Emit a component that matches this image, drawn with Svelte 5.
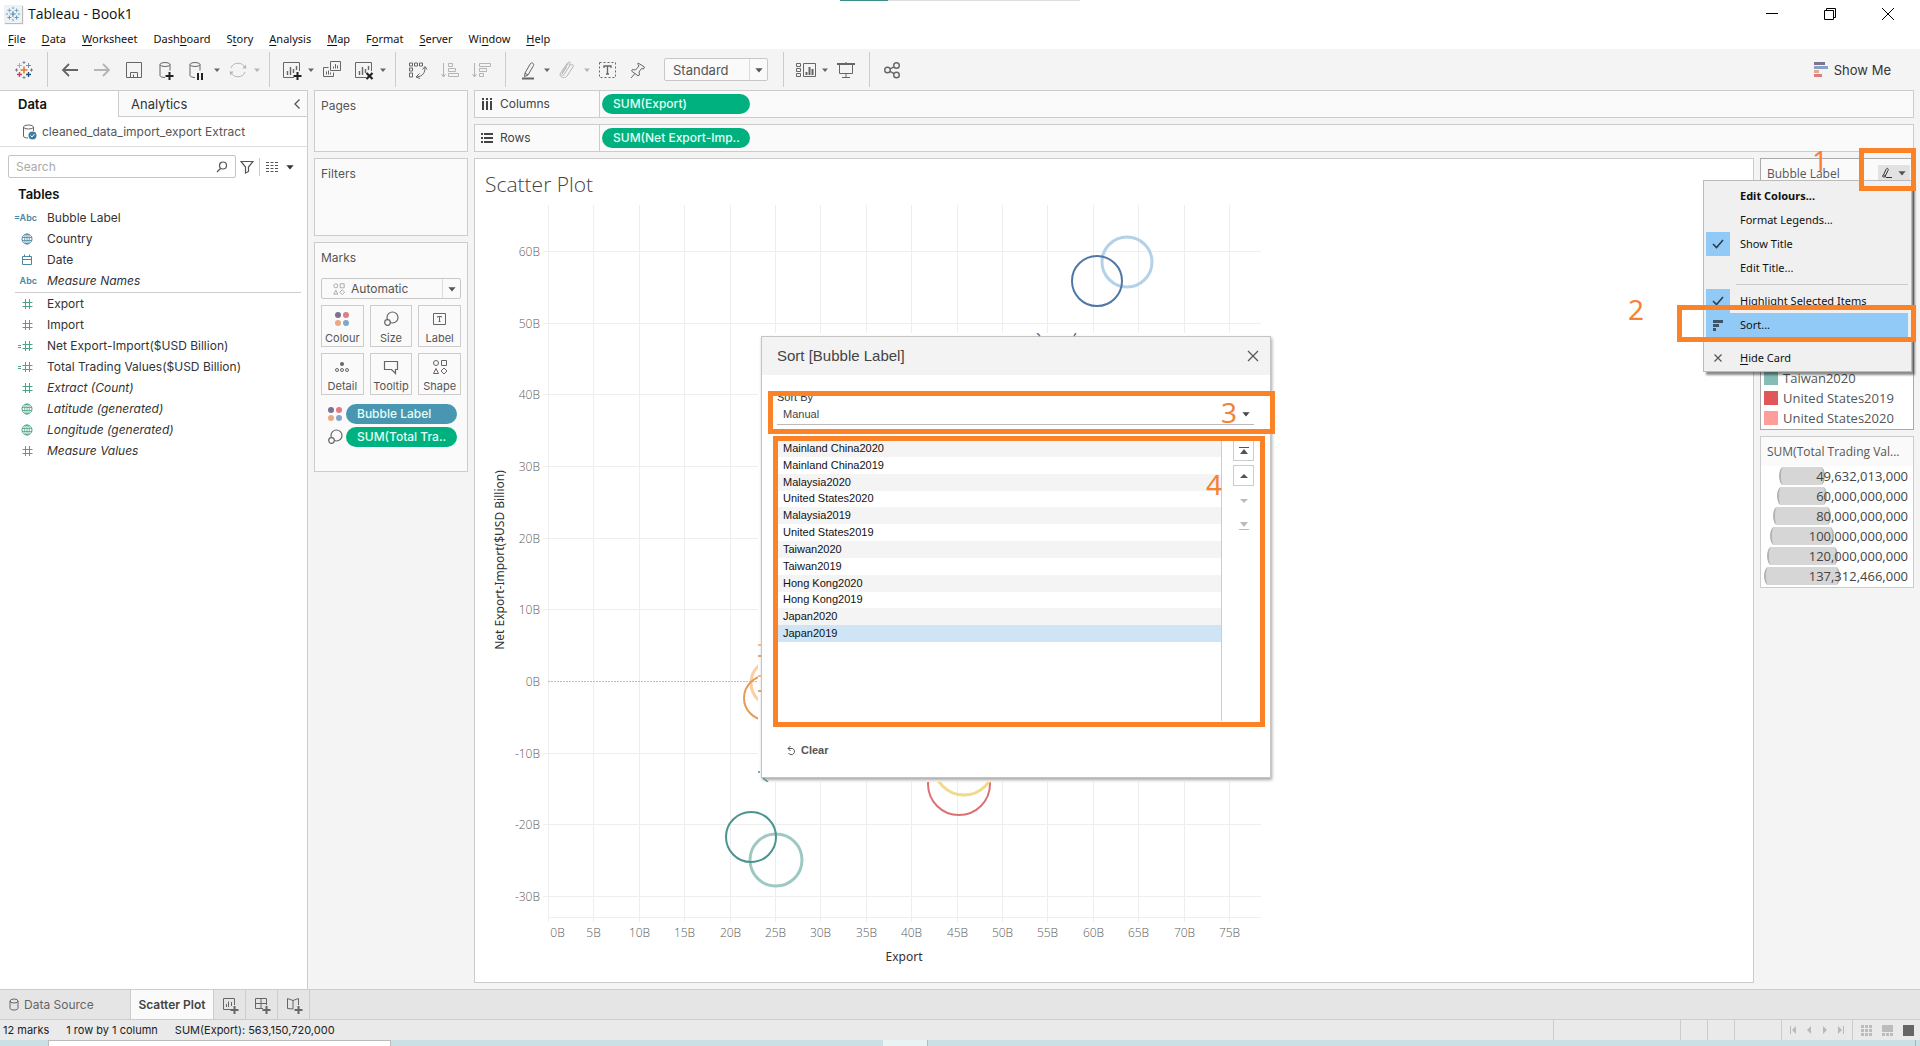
<script lang="ts">
	type Field = { icon: string; label: string; generated?: boolean };
	type Mark = { x: number; y: number; r: number; color: string; width?: number };

	const menus = [
		["", "F", "ile"],
		["", "D", "ata"],
		["", "W", "orksheet"],
		["Dash", "b", "oard"],
		["S", "t", "ory"],
		["", "A", "nalysis"],
		["", "M", "ap"],
		["F", "o", "rmat"],
		["", "S", "erver"],
		["Wi", "n", "dow"],
		["", "H", "elp"],
	];

	const dimensions: Field[] = [
		{ icon: "calc-abc", label: "Bubble Label" },
		{ icon: "globe", label: "Country" },
		{ icon: "calendar", label: "Date" },
		{ icon: "abc", label: "Measure Names", generated: true },
	];

	const measures: Field[] = [
		{ icon: "hash", label: "Export" },
		{ icon: "hash", label: "Import" },
		{ icon: "calc-hash", label: "Net Export-Import($USD Billion)" },
		{ icon: "calc-hash", label: "Total Trading Values($USD Billion)" },
		{ icon: "hash", label: "Extract (Count)", generated: true },
		{ icon: "globe", label: "Latitude (generated)", generated: true },
		{ icon: "globe", label: "Longitude (generated)", generated: true },
		{ icon: "hash", label: "Measure Values", generated: true },
	];

	const markCards = [
		{ icon: "dots", label: "Colour" },
		{ icon: "size", label: "Size" },
		{ icon: "label", label: "Label" },
		{ icon: "detail", label: "Detail" },
		{ icon: "tooltip", label: "Tooltip" },
		{ icon: "shapes", label: "Shape" },
	];

	const sortOrder = [
		"Mainland China2020",
		"Mainland China2019",
		"Malaysia2020",
		"United States2020",
		"Malaysia2019",
		"United States2019",
		"Taiwan2020",
		"Taiwan2019",
		"Hong Kong2020",
		"Hong Kong2019",
		"Japan2020",
		"Japan2019",
	];
	let selected = $state("Japan2019");

	const colorLegend = [
		{ label: "Taiwan2020", color: "#86bcb6" },
		{ label: "United States2019", color: "#e15759" },
		{ label: "United States2020", color: "#ff9d9a" },
	];

	const sizeLegend = [
		{ label: "49,632,013,000", size: 46 },
		{ label: "60,000,000,000", size: 50 },
		{ label: "80,000,000,000", size: 58 },
		{ label: "100,000,000,000", size: 64 },
		{ label: "120,000,000,000", size: 71 },
		{ label: "137,312,466,000", size: 76 },
	];

	// chart geometry, in px of the chart's own viewBox
	const chartW = 800;
	const chartH = 770;
	const left = 73;
	const right = 786;
	const top = 6;
	const bottom = 718;
	const zeroY = 482;

	const xAt = (v: number) => Math.round(left + v * 9.08) + 0.5;
	const yAt = (v: number) => Math.round(zeroY - v * 7.17) + 0.5;

	const xTicks = Array.from({ length: 16 }, (_, i) => i * 5);
	const yTicks = Array.from({ length: 10 }, (_, i) => 60 - i * 10);

	const marks: Mark[] = [
		{ x: 652, y: 63, r: 25, color: "#b3d2e8", width: 3 },
		{ x: 622, y: 82, r: 25, color: "#4f77a5" },
		{ x: 299, y: 484, r: 23, color: "#fbcfa2", width: 3 },
		{ x: 291, y: 499, r: 22, color: "#e59b55" },
		{ x: 301, y: 661, r: 26, color: "#9fc8c2", width: 3 },
		{ x: 276, y: 638, r: 25, color: "#4a9490" },
		{ x: 484, y: 585, r: 31, color: "#dd7073" },
		{ x: 489, y: 566, r: 30, color: "#f1d987", width: 3 },
	];
</script>

{#snippet caret()}
	<svg class="caret" width="10" height="10" viewBox="0 0 10 10" aria-hidden="true">
		<path d="M2 3.500h6L5 7z" fill="currentColor" />
	</svg>
{/snippet}

{#snippet check()}
	<svg width="12" height="10" viewBox="0 0 12 10" fill="none" aria-hidden="true">
		<path d="M1 5l3.500 3.500L11 1" stroke="#2a3f50" stroke-width="1.600" />
	</svg>
{/snippet}

{#snippet sparkle(size: number, mono: boolean)}
	<svg width={size} height={size} viewBox="0 0 20 20" fill="none" aria-hidden="true">
		<path d="M10 6.500v7M6.500 10h7" stroke={mono ? "#4a87b0" : "#e8762c"} stroke-width="1.500" />
		<path d="M5.500 3v5M3 5.500h5" stroke={mono ? "#5b9bc0" : "#e8a15c"} />
		<path d="M14.500 3v5M12 5.500h5" stroke={mono ? "#5b9bc0" : "#6f8fa8"} />
		<path d="M5.500 12v5M3 14.500h5" stroke={mono ? "#5b9bc0" : "#c0405a"} stroke-width="1.300" />
		<path d="M14.500 12v5M12 14.500h5" stroke={mono ? "#5b9bc0" : "#1f4f7a"} stroke-width="1.300" />
		<path d="M10 1v3M8.500 2.500h3M10 16v3M8.500 17.500h3" stroke={mono ? "#7bb0cc" : "#7f86a8"} />
		<path d="M2.500 8.500v3M1 10h3M17.500 8.500v3M16 10h3" stroke={mono ? "#7bb0cc" : "#7a6b8f"} />
	</svg>
{/snippet}

{#snippet icon(name: string)}
	{#if name === "dots"}
		<svg width="16" height="16" viewBox="0 0 16 16" aria-hidden="true">
			<circle cx="4" cy="4" r="3" fill="#7f6f92" />
			<circle cx="12" cy="4" r="3" fill="#e37a86" />
			<circle cx="4" cy="12" r="3" fill="#eba982" />
			<circle cx="12" cy="12" r="3" fill="#83a5cc" />
		</svg>
	{:else}
		<svg width="20" height="20" viewBox="0 0 20 20" fill="none" stroke="currentColor" aria-hidden="true">
			{#if name === "back"}
				<path d="M18 10H3M9 4l-6 6 6 6" stroke-width="1.800" />
			{:else if name === "forward"}
				<path d="M2 10h15M11 4l6 6-6 6" stroke-width="1.800" />
			{:else if name === "save"}
				<path d="M2.500 2.500h15v15h-15zM6.500 17v-4.500h7V17M9.500 17v-2.500" />
			{:else if name === "db-add"}
				<ellipse cx="9" cy="4.500" rx="5" ry="2" />
				<path d="M4 4.500v11c0 1 2 2 5 2M14 4.500v6" />
				<path d="M13.500 12v8M9.500 16h8" stroke="#222" stroke-width="2" />
			{:else if name === "db-pause"}
				<ellipse cx="7" cy="4.500" rx="5" ry="2" />
				<path d="M2 4.500v11c0 1 2 2 5 2M12 4.500v6" />
				<path d="M10 13v7M14 13v7" stroke="#222" stroke-width="2" />
			{:else if name === "refresh"}
				<path d="M3 8a7.500 7.500 0 0 1 14 0M17 12a7.500 7.500 0 0 1-14 0" />
				<path d="M14.500 8.500h4l-1-4zM5.500 11.500h-4l1 4z" fill="currentColor" stroke="none" />
			{:else if name === "sheet-add" || name === "sheet-clear"}
				<path d="M12 17.500H1.500v-15h16V11" />
				<path d="M5.500 15v-4M8.500 15V7M11.500 13V9M14.500 10V6" stroke-width="1.400" />
				{#if name === "sheet-add"}
					<path d="M15.500 12v8M11.500 16h8" stroke="#222" stroke-width="2" />
				{:else}
					<path d="M12.500 13l6 6M18.500 13l-6 6" stroke="#222" stroke-width="2.200" />
				{/if}
			{:else if name === "duplicate"}
				<path d="M8.500 1.500h10v9h-10zM6.500 7.500h-5v9h10v-4" />
				<path d="M11.500 8.500v-2M13.500 8.500V4M15.500 8.500v-3M4.500 14.500v-3M6.500 14.500v-4M8.500 14.500v-2" />
			{:else if name === "swap"}
				<path d="M1.500 3h3v3h-3zM6.500 3h3v3h-3zM11.500 3h3v3h-3zM1.500 8h3v3h-3zM1.500 13h3v4h-3z" />
				<path d="M17 7c0 6-2 9-8 10M14.500 9.500L17 6.500l2 3M11.500 13.500L8 17l4 1.500" />
			{:else if name === "sort-asc"}
				<path d="M3.500 3v14M1.500 14l2 3 2-3M8.500 3.500h4v3h-4zM8.500 8.500h7v3h-7zM8.500 13.500h10v3h-10z" />
			{:else if name === "sort-desc"}
				<path d="M2.500 3v14M.5 14l2 3 2-3M7.500 3.500h11v3h-11zM7.500 8.500h7v3h-7zM7.500 13.500h4v3h-4z" />
			{:else if name === "highlight"}
				<path d="M7 13l5.500-9.500c1-1.500 4 0 3 2L10 15l-3.500 1.500zM7 13l3 2" />
				<path d="M4 18.500h12" stroke-width="2" />
			{:else if name === "clip"}
				<path d="M4 13l5.500-8.500c1-1.500 3-.5 2 1.500L6 14.500c-1 1.500-2.500.5-2-.5l4.500-7M11.500 5.500c3-2 4.500-.5 3.500 1.500l-6 9c-1.500 2-5.500 2-6.500 0-1-1.500 0-3 1-4.500l6-8.500c1.500-1.500 3-1 3 .5" />
			{:else if name === "text"}
				<path d="M1.500 2.500h16v15h-16z" stroke-dasharray="2 2" />
				<path d="M6 8V6h7v2M9.500 6v8M8 14h3" stroke-width="1.300" />
			{:else if name === "pin"}
				<path d="M8 3l6.500 4-1 2-2-.5L9 12l.5 3-1.500.8L1.500 11l1-1.500 3 .5L9 6 8 4.500zM5 13.500L1 18" />
			{:else if name === "cards"}
				<path d="M.5 3.500h4v3h-4zM.5 8.500h4v3h-4zM.5 13.500h4v3h-4zM7.500 3.500h12v13h-12z" />
				<path d="M10.500 15v-3M13.500 15V7M16.500 15V9" stroke-width="2" />
			{:else if name === "present"}
				<path d="M1 4h18" stroke-width="2" />
				<path d="M3.500 5v8.500h13V5M10 2v2M10 13.500v4M6 17.500h8" />
			{:else if name === "share"}
				<circle cx="5.500" cy="10" r="2.800" stroke-width="1.400" />
				<circle cx="14.500" cy="5.500" r="2.800" stroke-width="1.400" />
				<circle cx="14.500" cy="15" r="2.800" stroke-width="1.400" />
				<path d="M8 8.800l4-2M8 11.400l4 2.200" stroke-width="1.400" />
			{:else if name === "globe"}
				<circle cx="10" cy="10" r="5" />
				<ellipse cx="10" cy="10" rx="2.300" ry="5" stroke-width=".8" />
				<path d="M5 8.500h10M5 11.500h10M10 5v10" stroke-width=".8" />
			{:else if name === "calendar"}
				<path d="M5.500 6.500h9v8h-9zM5.500 9.500h9M7.500 4.500v2M12.500 4.500v2" />
			{:else if name === "hash" || name === "calc-hash"}
				<path d="M8.500 5v10M12.500 5v10M5.500 8.500h10M5.500 12.500h10" />
				{#if name === "calc-hash"}
					<path d="M1 9.500h3M1 11.500h3" />
				{/if}
			{:else if name === "size"}
				<circle cx="11.500" cy="8.500" r="5.500" stroke-width="1.200" />
				<circle cx="6.500" cy="13.500" r="2.800" fill="#fafafa" stroke-width="1.200" />
			{:else if name === "label"}
				<path d="M3.500 4.500h12v11h-12z" />
				<path d="M7.500 8.500v-1h4v1M9.500 7.500v5M8.500 12.500h2" />
			{:else if name === "detail"}
				<circle cx="10" cy="7" r="2" fill="currentColor" stroke="none" />
				<circle cx="5" cy="13" r="1.500" />
				<circle cx="10" cy="13" r="1.500" />
				<circle cx="15" cy="13" r="1.500" />
			{:else if name === "tooltip"}
				<path d="M3.500 4.500h13v8h-2v4l-4-4h-7z" stroke-width="1.200" />
			{:else if name === "shapes"}
				<circle cx="6" cy="6" r="2.500" />
				<path d="M11.500 3.500h5v5h-5zM6 11.500l2.500 5h-5z" />
				<path d="M14 11l3 3-3 3-3-3z" />
			{:else if name === "new-sheet"}
				<path d="M11 14.500H3.500v-11h11V10M6.500 12V9M8.500 12V6.500M11.500 11V7" />
				<path d="M14.500 11v8M10.500 15h8" stroke-width="2" />
			{:else if name === "new-dash"}
				<path d="M11 13.500H3.500v-10h11V10M9 3.500v10M3.500 8.500h11" />
				<path d="M14.500 11v8M10.500 15h8" stroke-width="2" />
			{:else if name === "new-story"}
				<path d="M9 5.500v8.500l-5.500-.5v-10L9 5.500l5.500-2V10" />
				<path d="M14.500 11v8M10.500 15h8" stroke-width="2" />
			{/if}
		</svg>
	{/if}
{/snippet}

{#snippet tool(name: string, label: string, off = false)}
	<button class="tool" class:off aria-label={label}>{@render icon(name)}</button>
{/snippet}

{#snippet menuTool(name: string, label: string, off = false)}
	<button class="tool pair" class:off aria-label={label}>{@render icon(name)}{@render caret()}</button>
{/snippet}

{#snippet field(f: Field, measure: boolean)}
	<li class="field" class:measure class:generated={f.generated}>
		<span class="field-icon">
			{#if f.icon === "abc"}<b>Abc</b>{:else if f.icon === "calc-abc"}<b>=Abc</b>{:else}{@render icon(f.icon)}{/if}
		</span>
		<span>{f.label}</span>
	</li>
{/snippet}

<div class="app">
	<header class="titlebar">
		<span class="app-icon">{@render sparkle(16, true)}</span>
		<span class="app-title">Tableau - Book1</span>
		<span class="edge-mark"></span>
		<div class="win-buttons">
			<button aria-label="Minimise"><svg width="14" height="14" viewBox="0 0 14 14"><path d="M1 6.500h12" stroke="#000" /></svg></button>
			<button aria-label="Restore"><svg width="14" height="14" viewBox="0 0 14 14" fill="none" stroke="#000"><path d="M1.500 3.500h9v9h-9zM3.500 3V1.500h9v9H11" /></svg></button>
			<button aria-label="Close window"><svg width="14" height="14" viewBox="0 0 14 14"><path d="M1 1l12 12M13 1L1 13" stroke="#000" /></svg></button>
		</div>
	</header>

	<nav class="menubar">
		{#each menus as [before, key, after]}
			<button>{before}<u>{key}</u>{after}</button>
		{/each}
	</nav>

	<div class="toolbar">
		<div class="group first"><button class="tool" aria-label="Start page">{@render sparkle(20, false)}</button></div>
		<div class="group">
			{@render tool("back", "Undo")}
			{@render tool("forward", "Redo", true)}
			{@render tool("save", "Save")}
			{@render tool("db-add", "New data source")}
			{@render menuTool("db-pause", "Pause auto updates")}
			{@render menuTool("refresh", "Run update", true)}
		</div>
		<div class="group">
			{@render menuTool("sheet-add", "New worksheet")}
			{@render tool("duplicate", "Duplicate")}
			{@render menuTool("sheet-clear", "Clear sheet")}
		</div>
		<div class="group">
			{@render tool("swap", "Swap rows and columns")}
			{@render tool("sort-asc", "Sort ascending", true)}
			{@render tool("sort-desc", "Sort descending", true)}
		</div>
		<div class="group">
			{@render menuTool("highlight", "Highlight")}
			{@render menuTool("clip", "Group members", true)}
			{@render tool("text", "Show mark labels")}
			{@render tool("pin", "Fix axes")}
			<div class="combo fit">
				<select aria-label="Fit"><option>Standard</option></select>
				<span class="combo-arrow">{@render caret()}</span>
			</div>
		</div>
		<div class="group">
			{@render menuTool("cards", "Show or hide cards")}
			{@render tool("present", "Presentation mode")}
		</div>
		<div class="group last">{@render tool("share", "Share workbook")}</div>
		<button class="show-me">
			<svg width="14" height="16" viewBox="0 0 14 16" aria-hidden="true">
				<path d="M0 0h11v3H0z" fill="#7f7391" />
				<path d="M0 4h14v3H0z" fill="#86a2c6" />
				<path d="M0 8h5v3H0z" fill="#e3ac88" />
				<path d="M0 12h8v3H0z" fill="#e07b84" />
			</svg>
			Show Me
		</button>
	</div>

	<div class="workspace">
		<aside class="data-pane">
			<div class="pane-tabs">
				<button class="pane-tab active">Data</button>
				<button class="pane-tab">Analytics</button>
				<button class="collapse" aria-label="Collapse pane"><svg width="8" height="12" viewBox="0 0 8 12" fill="none"><path d="M6.500 1.500L2 6l4.500 4.500" stroke="#555" stroke-width="1.300" /></svg></button>
			</div>
			<div class="source">
				<svg width="16" height="16" viewBox="0 0 16 16" fill="none" aria-hidden="true">
					<ellipse cx="6.500" cy="3" rx="5" ry="2" stroke="#666" />
					<path d="M1.500 3v9c0 1.500 2 2 4.500 2M11.500 3v4" stroke="#666" />
					<circle cx="10.500" cy="11.500" r="4" fill="#3a7f9c" />
					<path d="M8.500 11.500l1.500 1.500 2.500-3" stroke="#fff" />
				</svg>
				<span>cleaned_data_import_export Extract</span>
			</div>
			<div class="search-row">
				<label class="search">
					<input type="text" placeholder="Search" aria-label="Search fields" />
					<svg width="12" height="12" viewBox="0 0 12 12" fill="none" stroke="#555" stroke-width="1.200"><circle cx="7" cy="4.500" r="3.500" /><path d="M4.500 7.500L1 11" /></svg>
				</label>
				<button aria-label="Filter fields"><svg width="14" height="14" viewBox="0 0 14 14" fill="none" stroke="#555" stroke-width="1.200"><path d="M1 1.500h12L8.500 7v4.500L5.500 13V7z" /></svg></button>
				<button class="view-as" aria-label="View fields">
					<svg width="12" height="10" viewBox="0 0 12 10" stroke="#555"><path d="M0 .5h3M4.500.5h3M9 .5h3M0 3.500h3M4.500 3.500h3M9 3.500h3M0 6.500h3M4.500 6.500h3M9 6.500h3M0 9.500h3M4.500 9.500h3M9 9.500h3" /></svg>
					{@render caret()}
				</button>
			</div>
			<h2>Tables</h2>
			<ul>
				{#each dimensions as f (f.label)}{@render field(f, false)}{/each}
			</ul>
			<ul class="measures">
				{#each measures as f (f.label)}{@render field(f, true)}{/each}
			</ul>
		</aside>

		<div class="cards">
			<section class="card pages"><h3>Pages</h3></section>
			<section class="card filters"><h3>Filters</h3></section>
			<section class="card marks-card">
				<h3>Marks</h3>
				<div class="combo mark-type">
					<span class="combo-icon">{@render icon("shapes")}</span>
					<select aria-label="Mark type"><option>Automatic</option></select>
					<span class="combo-arrow">{@render caret()}</span>
				</div>
				<div class="mark-grid">
					{#each markCards as m (m.label)}
						<button class="mark-button"><span class="mark-icon">{@render icon(m.icon)}</span>{m.label}</button>
					{/each}
				</div>
				<div class="encoding"><span class="enc-icon">{@render icon("dots")}</span><span class="pill blue">Bubble Label</span></div>
				<div class="encoding"><span class="enc-icon">{@render icon("size")}</span><span class="pill">SUM(Total Tra..</span></div>
			</section>
		</div>

		<main class="canvas">
			<div class="shelf">
				<span class="shelf-name">
					<svg width="12" height="12" viewBox="0 0 12 12" stroke="#444" stroke-width="2"><path d="M2 0v2M6 0v2M10 0v2M2 3v9M6 3v9M10 3v9" /></svg>
					Columns
				</span>
				<span class="pill">SUM(Export)</span>
			</div>
			<div class="shelf">
				<span class="shelf-name">
					<svg width="12" height="12" viewBox="0 0 12 12" stroke="#444" stroke-width="2"><path d="M0 2h2M0 6h2M0 10h2M3 2h9M3 6h9M3 10h9" /></svg>
					Rows
				</span>
				<span class="pill">SUM(Net Export-Imp..</span>
			</div>
			<div class="view-row">
				<section class="view">
					<h1>Scatter Plot</h1>
					<svg class="chart" width={chartW} height={chartH} viewBox={`0 0 ${chartW} ${chartH}`} role="img" aria-label="Net Export-Import by Export">
						<g stroke="#eeeeee">
							{#each xTicks as t (t)}
								<path d={`M${xAt(t)} ${top}V${bottom + 5}`} />
							{/each}
							{#each yTicks as t (t)}
								{#if t !== 0}<path d={`M${left - 5} ${yAt(t)}H${right}`} />{/if}
							{/each}
							<path d={`M${left} ${bottom + 0.5}H${right}`} />
						</g>
						<path d={`M${left} ${yAt(0)}H${right}`} stroke="#bdbdbd" stroke-dasharray="2 1" />
						<g class="tick">
							{#each xTicks as t (t)}
								<text x={t === 0 ? xAt(0) + 9 : xAt(t)} y={bottom + 20} text-anchor="middle">{t}B</text>
							{/each}
							{#each yTicks as t (t)}
								<text x={left - 8} y={yAt(t) + 4} text-anchor="end">{t}B</text>
							{/each}
						</g>
						<text class="axis-title" x="429" y="762" text-anchor="middle">Export</text>
						<text class="axis-title" transform="translate(29 361) rotate(-90)" text-anchor="middle">Net Export-Import($USD Billion)</text>
						<g fill="none">
							{#each marks as m}
								<circle cx={m.x} cy={m.y} r={m.r} stroke={m.color} stroke-width={m.width ?? 2} />
							{/each}
						</g>
					</svg>
				</section>

				<div class="legends">
					<section class="card color-card">
						<div class="legend-head">
							<h3>Bubble Label</h3>
							<button class="legend-menu" aria-label="Edit legend" aria-expanded="true">
								<svg width="13" height="12" viewBox="0 0 13 12" fill="none" stroke="#333"><path d="M3.500 8L6 2.500c1-2 3-1 2 1L5 9.500c-1 1-2.500.5-2.500-.5s2-1.500 3.500 1.500h6" /></svg>
								{@render caret()}
							</button>
						</div>
						<ul class="color-list">
							{#each colorLegend as c (c.label)}
								<li><span class="swatch" style={`--c:${c.color}`}></span>{c.label}</li>
							{/each}
						</ul>
					</section>
					<section class="card size-card">
						<h3>SUM(Total Trading Val...</h3>
						<ul class="size-list">
							{#each sizeLegend as s (s.label)}
								<li><span class="disc-slot"><span class="disc" style={`--w:${s.size}px`}></span></span><span class="size-value">{s.label}</span></li>
							{/each}
						</ul>
					</section>
				</div>
			</div>
		</main>
	</div>

	<div class="sheet-tabs">
		<button class="sheet-tab source-tab">
			<svg width="10" height="13" viewBox="0 0 10 13" fill="none" stroke="#666"><ellipse cx="5" cy="3" rx="4" ry="2" /><path d="M1 3v7c0 1 1 2 4 2s4-1 4-2V3" /></svg>
			Data Source
		</button>
		<button class="sheet-tab current">Scatter Plot</button>
		<button class="sheet-tab add" aria-label="New worksheet tab">{@render icon("new-sheet")}</button>
		<button class="sheet-tab add" aria-label="New dashboard">{@render icon("new-dash")}</button>
		<button class="sheet-tab add" aria-label="New story">{@render icon("new-story")}</button>
	</div>

	<footer class="status">
		<span>12 marks</span>
		<span>1 row by 1 column</span>
		<span>SUM(Export): 563,150,720,000</span>
		<div class="status-cells">
			<i class="w127"></i><i class="w27"></i><i class="w27"></i><i class="w47"></i>
			<div class="pager">
				<svg width="56" height="10" viewBox="0 0 56 10" fill="#b9b9b9"><path d="M1 1h1v8H1zM7 1v8L3 5zM22 1v8l-4-4zM34 1v8l4-4zM49 1v8l4-4zM54 1h1v8h-1z" /></svg>
			</div>
			<div class="views">
				<svg width="11" height="11" viewBox="0 0 11 11" fill="#bcbcbc"><path d="M0 0h3v3H0zM4 0h3v3H4zM8 0h3v3H8zM0 4h3v3H0zM4 4h3v3H4zM8 4h3v3H8zM0 8h3v3H0zM4 8h3v3H4zM8 8h3v3H8z" /></svg>
				<svg width="11" height="11" viewBox="0 0 11 11" fill="#bcbcbc"><path d="M0 0h11v7H0zM0 8h3v3H0zM4 8h3v3H4zM8 8h3v3H8z" /></svg>
				<svg width="11" height="11" viewBox="0 0 11 11" fill="#666"><path d="M0 0h11v11H0z" /></svg>
			</div>
		</div>
	</footer>
	<div class="desktop-edge"><span class="edge-window"></span><span class="edge-active"></span><span class="edge-show"></span></div>

	<div class="dialog" role="dialog" aria-label="Sort [Bubble Label]">
		<div class="dialog-frame">
			<div class="dialog-head">
				<span>Sort [Bubble Label]</span>
				<button aria-label="Close"><svg width="12" height="12" viewBox="0 0 12 12"><path d="M1 1l10 10M11 1L1 11" stroke="#555" stroke-width="1.200" /></svg></button>
			</div>
			<div class="dialog-body">
				<label class="sort-by" for="sort-by">Sort By</label>
				<div class="sort-select">
					<select id="sort-by"><option>Manual</option></select>
					{@render caret()}
				</div>
				<div class="manual">
					<ul class="members" role="listbox" aria-label="Manual order">
						{#each sortOrder as name (name)}
							<li role="option" aria-selected={name === selected}><button class:selected={name === selected} onclick={() => (selected = name)}>{name}</button></li>
						{/each}
					</ul>
					<div class="movers">
						<button aria-label="Move to top"><svg width="10" height="8" viewBox="0 0 10 8"><path d="M0 0h10v1H0zM5 2l4 5H1z" fill="#555" /></svg></button>
						<button aria-label="Move up"><svg width="10" height="8" viewBox="0 0 10 8"><path d="M5 2l4 4H1z" fill="#555" /></svg></button>
						<button aria-label="Move down" disabled><svg width="10" height="8" viewBox="0 0 10 8"><path d="M1 2h8L5 6z" fill="#bbb" /></svg></button>
						<button aria-label="Move to bottom" disabled><svg width="10" height="8" viewBox="0 0 10 8"><path d="M1 0h8L5 5zM0 7h10v1H0z" fill="#bbb" /></svg></button>
					</div>
				</div>
				<button class="clear">
					<svg width="10" height="10" viewBox="0 0 10 10" fill="none" stroke="#555"><path d="M1 2.500h4.500a3.200 3.200 0 1 1-4 4.500M3.500 0L1 2.500 3.500 5" /></svg>
					Clear
				</button>
			</div>
		</div>
		<!-- slivers of marks that stick out past the dialog edge -->
		<svg class="slivers" width="513" height="449" viewBox="0 0 513 449" fill="none" stroke-width="1.500">
			<path d="M279 0l3 3M318 0l-2 3" stroke="#5c7896" />
			<path d="M0 312h3M0 343h3" stroke="#f0a868" />
			<path d="M0 323h3M0 358h3" stroke="#c98b5a" />
			<path d="M0 439h2M5 445l5 4" stroke="#4a9490" />
		</svg>
		<span class="callout box-sort-by"></span>
		<span class="callout box-members"></span>
		<span class="step step-3">3</span>
		<span class="step step-4">4</span>
	</div>

	<div class="context">
		<button class="item"><span class="gutter"></span><b>Edit Colours...</b></button>
		<button class="item"><span class="gutter"></span>Format Legends...</button>
		<button class="item"><span class="gutter on">{@render check()}</span>Show Title</button>
		<button class="item"><span class="gutter"></span>Edit Title...</button>
		<hr />
		<button class="item"><span class="gutter on">{@render check()}</span>Highlight Selected Items</button>
		<button class="item hot"><span class="gutter"><svg width="10" height="12" viewBox="0 0 10 12" fill="#3d5468"><path d="M0 1h10v3H0zM0 5h6v3H0zM0 9h3v3H0z" /></svg></span>Sort...</button>
		<hr />
		<button class="item"><span class="gutter"><svg width="8" height="8" viewBox="0 0 8 8"><path d="M.5.5l7 7M7.500.5l-7 7" stroke="#555" stroke-width="1.200" /></svg></span><span><u>H</u>ide Card</span></button>
	</div>
	<span class="callout box-legend-menu"></span>
	<span class="callout box-sort"></span>
	<span class="step step-1">1</span>
	<span class="step step-2">2</span>
</div>

<style>
	:global(body) {
		margin: 0;
	}

	.app {
		position: relative;
		display: flex;
		flex-direction: column;
		min-height: 100vh;
		overflow: hidden;
		background: #f4f4f4;
		color: #333;
		font: 12px/16px Inter, "Open Sans", sans-serif;
	}

	button,
	input,
	select {
		margin: 0;
		padding: 0;
		border: 0;
		background: none;
		color: inherit;
		font: inherit;
		text-align: left;
	}

	select {
		appearance: none;
		flex: 1;
		min-width: 0;
	}

	ul {
		margin: 0;
		padding: 0;
		list-style: none;
	}

	h1,
	h2,
	h3 {
		margin: 0;
		font-weight: 400;
	}

	svg {
		display: block;
		flex: none;
	}

	/* title bar and menus */
	.titlebar {
		display: flex;
		align-items: center;
		height: 28px;
		padding-left: 4px;
		background: #fff;
	}

	.app-icon {
		padding: 1px;
		background: #eef2f5;
		box-shadow: 1px 1px 1px #bbb;
	}

	.app-title {
		margin-left: 6px;
		color: #111;
		font: 14px/20px "Open Sans", sans-serif;
	}

	.edge-mark {
		position: absolute;
		top: 0;
		left: 840px;
		width: 48px;
		height: 1px;
		background: #3a8f84;
		box-shadow: 48px 0 #ddd, 96px 0 #ddd, 144px 0 #ddd, 192px 0 #ddd;
	}

	.win-buttons {
		display: flex;
		gap: 44px;
		margin-left: auto;
		padding-right: 25px;
	}

	.menubar {
		display: flex;
		gap: 16px;
		height: 21px;
		padding-left: 8px;
		background: #fff;
		color: #111;
		font: 11px/20px "Noto Sans", sans-serif;
	}

	u {
		text-underline-offset: 2px;
	}

	/* toolbar */
	.toolbar {
		display: flex;
		align-items: center;
		height: 41px;
		color: #666;
	}

	.group {
		display: flex;
		align-items: center;
		gap: 12px;
		height: 35px;
		padding: 0 13px 0 12px;
		border-right: 1px solid #ccc;
	}

	.group.first {
		padding-left: 14px;
	}

	.group.last {
		border: 0;
	}

	.tool.off {
		color: #b5b5b5;
	}

	.tool.pair {
		display: flex;
		align-items: center;
		gap: 4px;
		margin-right: -6px;
	}

	.combo {
		display: flex;
		align-items: center;
		box-sizing: border-box;
		border: 1px solid #c8c8c8;
		border-radius: 2px;
		background: #fafafa;
		color: #555;
	}

	.combo-arrow {
		display: flex;
		align-items: center;
		justify-content: center;
		align-self: stretch;
		width: 17px;
		border-left: 1px solid #ddd;
	}

	.combo-arrow .caret,
	.view-as .caret,
	.legend-menu .caret,
	.sort-select .caret {
		width: 12px;
		height: 12px;
	}

	.fit {
		width: 104px;
		height: 23px;
		margin: 0 2px;
		padding-left: 8px;
		font-size: 13px;
	}

	.show-me {
		display: flex;
		align-items: center;
		gap: 6px;
		margin-left: auto;
		padding-right: 29px;
		color: #333;
		font-size: 13px;
	}

	/* data pane */
	.workspace {
		display: flex;
		flex: 1;
	}

	.data-pane {
		box-sizing: border-box;
		width: 308px;
		border-right: 1px solid #ccc;
		background: #fff;
	}

	.pane-tabs {
		display: flex;
		height: 27px;
		border-top: 1px solid #ccc;
		box-sizing: border-box;
		font-size: 13px;
		background: #fafafa;
	}

	.pane-tab {
		flex: 1;
		border-bottom: 1px solid #ccc;
		padding-left: 12px;
	}

	.pane-tab.active {
		flex: none;
		width: 119px;
		padding-left: 18px;
		border-right: 1px solid #ccc;
		border-bottom: 0;
		background: #fff;
		color: #111;
		font-weight: 600;
	}

	.collapse {
		padding: 0 6px;
		border-bottom: 1px solid #ccc;
	}

	.source {
		display: flex;
		align-items: center;
		gap: 4px;
		height: 29px;
		padding-left: 22px;
		border-bottom: 1px solid #ddd;
		color: #555;
	}

	.search-row {
		display: flex;
		align-items: center;
		gap: 4px;
		margin: 8px 0 0 8px;
	}

	.search {
		display: flex;
		align-items: center;
		box-sizing: border-box;
		width: 228px;
		height: 23px;
		padding: 0 7px;
		border: 1px solid #c4c4c4;
		border-radius: 2px;
	}

	.search input {
		flex: 1;
		min-width: 0;
		outline: 0;
	}

	.search input::placeholder {
		color: #aaa;
	}

	.view-as {
		display: flex;
		align-items: center;
		gap: 6px;
		height: 18px;
		margin-left: 1px;
		padding-left: 6px;
		border-left: 1px solid #ccc;
	}

	h2 {
		margin: 7px 0 4px 18px;
		color: #111;
		font-size: 13px;
		font-weight: 600;
		line-height: 18px;
	}

	.field {
		display: flex;
		align-items: center;
		height: 21px;
	}

	.field-icon {
		display: flex;
		justify-content: flex-end;
		width: 37px;
		margin-right: 10px;
		color: #4b87a3;
		font-size: 9px;
	}

	.measure .field-icon {
		color: #4ca587;
	}

	.generated {
		font-style: italic;
	}

	.field-icon b {
		font-style: normal;
		font-weight: 600;
	}

	.measures {
		margin: 0 6px 0 0;
		padding-top: 1px;
	}

	.measures::before {
		content: "";
		display: block;
		margin-left: 15px;
		border-top: 1px solid #ccc;
	}

	/* cards */
	.cards {
		display: flex;
		flex-direction: column;
		gap: 6px;
		width: 154px;
		margin: 0 6px;
	}

	.card {
		box-sizing: border-box;
		border: 1px solid #ccc;
		background: #fafafa;
		color: #555;
	}

	.card h3 {
		padding: 6px 6px 0;
		font-size: inherit;
		line-height: 17px;
	}

	.pages {
		height: 62px;
	}

	.filters {
		height: 78px;
	}

	.marks-card {
		height: 230px;
	}

	.mark-type {
		height: 21px;
		margin: 12px 6px 6px;
	}

	.combo-icon {
		margin: 0 4px 0 9px;
		color: #999;
	}

	.combo-icon svg {
		width: 16px;
		height: 16px;
	}

	.mark-grid {
		display: grid;
		grid-template-columns: repeat(3, 1fr);
		gap: 6px;
		margin: 0 6px 9px;
	}

	.mark-button {
		display: flex;
		flex-direction: column;
		align-items: center;
		justify-content: space-between;
		height: 42px;
		box-sizing: border-box;
		padding: 3px 0 0;
		border: 1px solid #ccc;
		font-size: 11px;
	}

	.mark-icon {
		display: flex;
		align-items: center;
		height: 20px;
		color: #666;
	}

	.encoding {
		display: flex;
		align-items: center;
		gap: 1px;
		margin: 0 10px 3px 10px;
	}

	.enc-icon {
		display: flex;
		justify-content: center;
		width: 20px;
		color: #666;
	}

	.pill {
		flex: 1;
		box-sizing: border-box;
		height: 20px;
		padding-left: 11px;
		border-radius: 10px;
		background: #00b180;
		color: #e3fff5;
		font-weight: 500;
		line-height: 20px;
		white-space: nowrap;
	}

	.pill.blue {
		background: #4996b2;
	}

	/* shelves and view */
	.canvas {
		display: flex;
		flex: 1;
		flex-direction: column;
		gap: 6px;
		min-width: 0;
		margin-right: 6px;
	}

	.shelf {
		display: flex;
		align-items: center;
		gap: 2px;
		height: 26px;
		border: 1px solid #ccc;
		background: #fafafa;
	}

	.shelf-name {
		display: flex;
		align-items: center;
		gap: 7px;
		align-self: stretch;
		box-sizing: border-box;
		width: 125px;
		padding-left: 6px;
		border-right: 1px solid #ccc;
		color: #444;
	}

	.shelf .pill {
		flex: none;
		width: 148px;
	}

	.view-row {
		display: flex;
		flex: 1;
		gap: 6px;
		margin-bottom: 6px;
	}

	.view {
		flex: 1;
		min-width: 0;
		border: 1px solid #ccc;
		background: #fff;
	}

	h1 {
		padding: 11px 10px 1px;
		color: #444;
		font: 300 21px/28px "Open Sans", sans-serif;
	}

	.tick {
		fill: #5c5c5c;
		font: 300 12px "Open Sans", sans-serif;
	}

	.axis-title {
		fill: #333;
		font: 12px "Noto Sans", sans-serif;
	}

	.legends {
		display: flex;
		flex-direction: column;
		gap: 6px;
		width: 154px;
		font: 13px/20px "Open Sans", sans-serif;
	}

	.legends h3 {
		font-family: "Open Sans", sans-serif;
		font-size: 12px;
	}

	.color-card {
		display: flex;
		flex-direction: column;
		height: 272px;
		border-color: #aaa;
	}

	.legend-head {
		display: flex;
		justify-content: space-between;
	}

	.legend-menu {
		display: flex;
		align-items: center;
		gap: 3px;
		height: 16px;
		margin: 6px 3px 0 0;
		padding: 0 2px;
		background: #e2e2e2;
	}

	.color-list {
		display: flex;
		flex: 1;
		flex-direction: column;
		justify-content: flex-end;
		padding: 0 3px 1px;
		background: #fff;
	}

	.color-list li {
		display: flex;
		align-items: center;
		gap: 5px;
		height: 20px;
		color: #555;
	}

	.swatch {
		width: 14px;
		height: 14px;
		background: var(--c);
	}

	.size-card h3 {
		padding-bottom: 6px;
		white-space: nowrap;
	}

	.size-list {
		padding-bottom: 1px;
		background: #fff;
	}

	.size-list li {
		display: flex;
		align-items: center;
		height: 20px;
		padding-left: 3px;
	}

	.disc-slot {
		display: flex;
		justify-content: center;
		width: 76px;
		margin-right: -48px;
	}

	.disc {
		box-sizing: border-box;
		width: var(--w);
		height: 18px;
		border: 2px solid #b4b4b4;
		border-width: 0 2px;
		border-radius: 4px / 9px;
		background: #d6d6d6;
	}

	.size-value {
		position: relative;
		flex: 1;
		padding-right: 5px;
		color: #444;
		text-align: right;
	}

	/* bottom bars */
	.sheet-tabs {
		display: flex;
		height: 29px;
		border-top: 1px solid #ccc;
		border-bottom: 1px solid #ccc;
		background: #e5e5e5;
		color: #666;
	}

	.sheet-tab {
		display: flex;
		align-items: center;
		justify-content: center;
		box-sizing: border-box;
		border-right: 1px solid #ccc;
	}

	.source-tab {
		justify-content: flex-start;
		gap: 5px;
		width: 131px;
		padding-left: 9px;
	}

	.current {
		width: 83px;
		background: #fafafa;
		color: #444;
		font-weight: 600;
		white-space: nowrap;
	}

	.add {
		width: 32px;
	}

	.status {
		display: flex;
		align-items: center;
		gap: 17px;
		height: 20px;
		padding-left: 3px;
		background: #eaeaea;
		color: #222;
		font-size: 11px;
	}

	.status-cells {
		display: flex;
		align-self: stretch;
		margin-left: auto;
	}

	.status-cells > * {
		box-sizing: border-box;
		border-left: 1px solid #ccc;
	}

	.w127 {
		width: 127px;
	}

	.w27 {
		width: 27px;
	}

	.w47 {
		width: 47px;
	}

	.pager {
		display: flex;
		align-items: center;
		width: 71px;
		padding-left: 7px;
	}

	.views {
		display: flex;
		align-items: center;
		gap: 10px;
		width: 68px;
		padding-left: 8px;
	}

	.desktop-edge {
		display: flex;
		height: 6px;
		background: #cbe0e5;
	}

	.edge-window {
		box-sizing: border-box;
		width: 343px;
		margin-left: 48px;
		border: 1px solid #bbb;
		border-bottom: 0;
		background: #fff;
	}

	.edge-active {
		width: 44px;
		margin-left: 492px;
		border-right: 1px solid #b0bcc4;
		background: #e9f3f3;
	}

	.edge-show {
		width: 4px;
		margin-left: auto;
		border-left: 1px solid #9bb;
	}

	/* sort dialog */
	.dialog {
		position: absolute;
		top: 333px;
		left: 758px;
		width: 510px;
		padding: 3px 0 4px 3px;
		background: #fff;
		color: #222;
		font: 11px/13px "Liberation Sans", Arial, sans-serif;
	}

	.dialog-frame {
		box-sizing: border-box;
		height: 442px;
		border: 1px solid #c4c4c4;
		background: #fff;
		box-shadow: 1px 2px 3px rgba(0, 0, 0, 0.35);
	}

	.dialog-head {
		display: flex;
		align-items: center;
		justify-content: space-between;
		height: 37px;
		padding: 0 11px 1px 15px;
		background: #f3f3f3;
		color: #444;
		font-size: 15px;
	}

	.dialog-body {
		display: flex;
		flex-direction: column;
		padding: 16px 16px 0 15px;
	}

	.sort-by {
		color: #333;
	}

	.sort-select {
		display: flex;
		align-items: center;
		height: 20px;
		padding: 0 2px 0 6px;
		border-bottom: 1px solid #bbb;
		color: #444;
	}

	.manual {
		display: flex;
		height: 281px;
		margin-top: 15px;
	}

	.members {
		display: grid;
		grid-auto-rows: 1fr;
		flex: 1;
		height: 202px;
	}

	.members li:nth-child(odd) {
		background: #f4f4f4;
	}

	.members button {
		display: block;
		width: 100%;
		height: 100%;
		padding-left: 6px;
		color: #111;
	}

	.members button.selected {
		background: #cfe5f6;
	}

	.movers {
		display: flex;
		flex-direction: column;
		gap: 4px;
		padding-left: 11px;
		border-left: 1px solid #ccc;
	}

	.movers button {
		display: flex;
		align-items: center;
		justify-content: center;
		box-sizing: border-box;
		width: 21px;
		height: 21px;
		border: 1px solid #ccc;
	}

	.movers button:disabled {
		border-color: transparent;
	}

	.clear {
		display: flex;
		align-items: center;
		gap: 4px;
		margin: 23px 0 0 10px;
		color: #555;
		font-weight: 700;
	}

	.slivers {
		position: absolute;
		top: 0;
		left: 0;
		pointer-events: none;
	}

	/* legend context menu */
	.context {
		position: absolute;
		top: 180px;
		right: 8px;
		box-sizing: border-box;
		width: 209px;
		padding: 3px 3px 1px 2px;
		border: 1px solid #bbb;
		background: #f0f0f0;
		box-shadow: 3px 3px 2px rgba(0, 0, 0, 0.45);
		color: #111;
		font: 11px/24px "Noto Sans", sans-serif;
	}

	.item {
		display: flex;
		align-items: center;
		width: 100%;
		height: 24px;
	}

	.gutter {
		display: flex;
		align-items: center;
		justify-content: center;
		width: 24px;
		height: 24px;
		margin-right: 10px;
	}

	.gutter.on,
	.item.hot {
		background: #91c9f7;
	}

	.context hr {
		height: 1px;
		margin: 4px 0 4px 30px;
		border: 0;
		background: #ccc;
	}

	/* tutorial callouts */
	.callout {
		position: absolute;
		box-sizing: border-box;
		border: 5px solid #fc8228;
		pointer-events: none;
	}

	.step {
		position: absolute;
		color: #f58235;
		font: 28px/28px "Noto Sans", sans-serif;
	}

	.box-sort-by {
		top: 58px;
		left: 10px;
		width: 507px;
		height: 43px;
	}

	.box-members {
		top: 103px;
		left: 15px;
		width: 492px;
		height: 291px;
	}

	.step-3 {
		top: 65px;
		left: 463px;
	}

	.step-4 {
		top: 137px;
		left: 448px;
	}

	.box-legend-menu {
		top: 148px;
		right: 4px;
		width: 57px;
		height: 43px;
	}

	.box-sort {
		top: 305px;
		right: 4px;
		width: 239px;
		height: 37px;
	}

	.step-1 {
		top: 146px;
		right: 92px;
	}

	.step-2 {
		top: 295px;
		right: 276px;
	}
</style>
